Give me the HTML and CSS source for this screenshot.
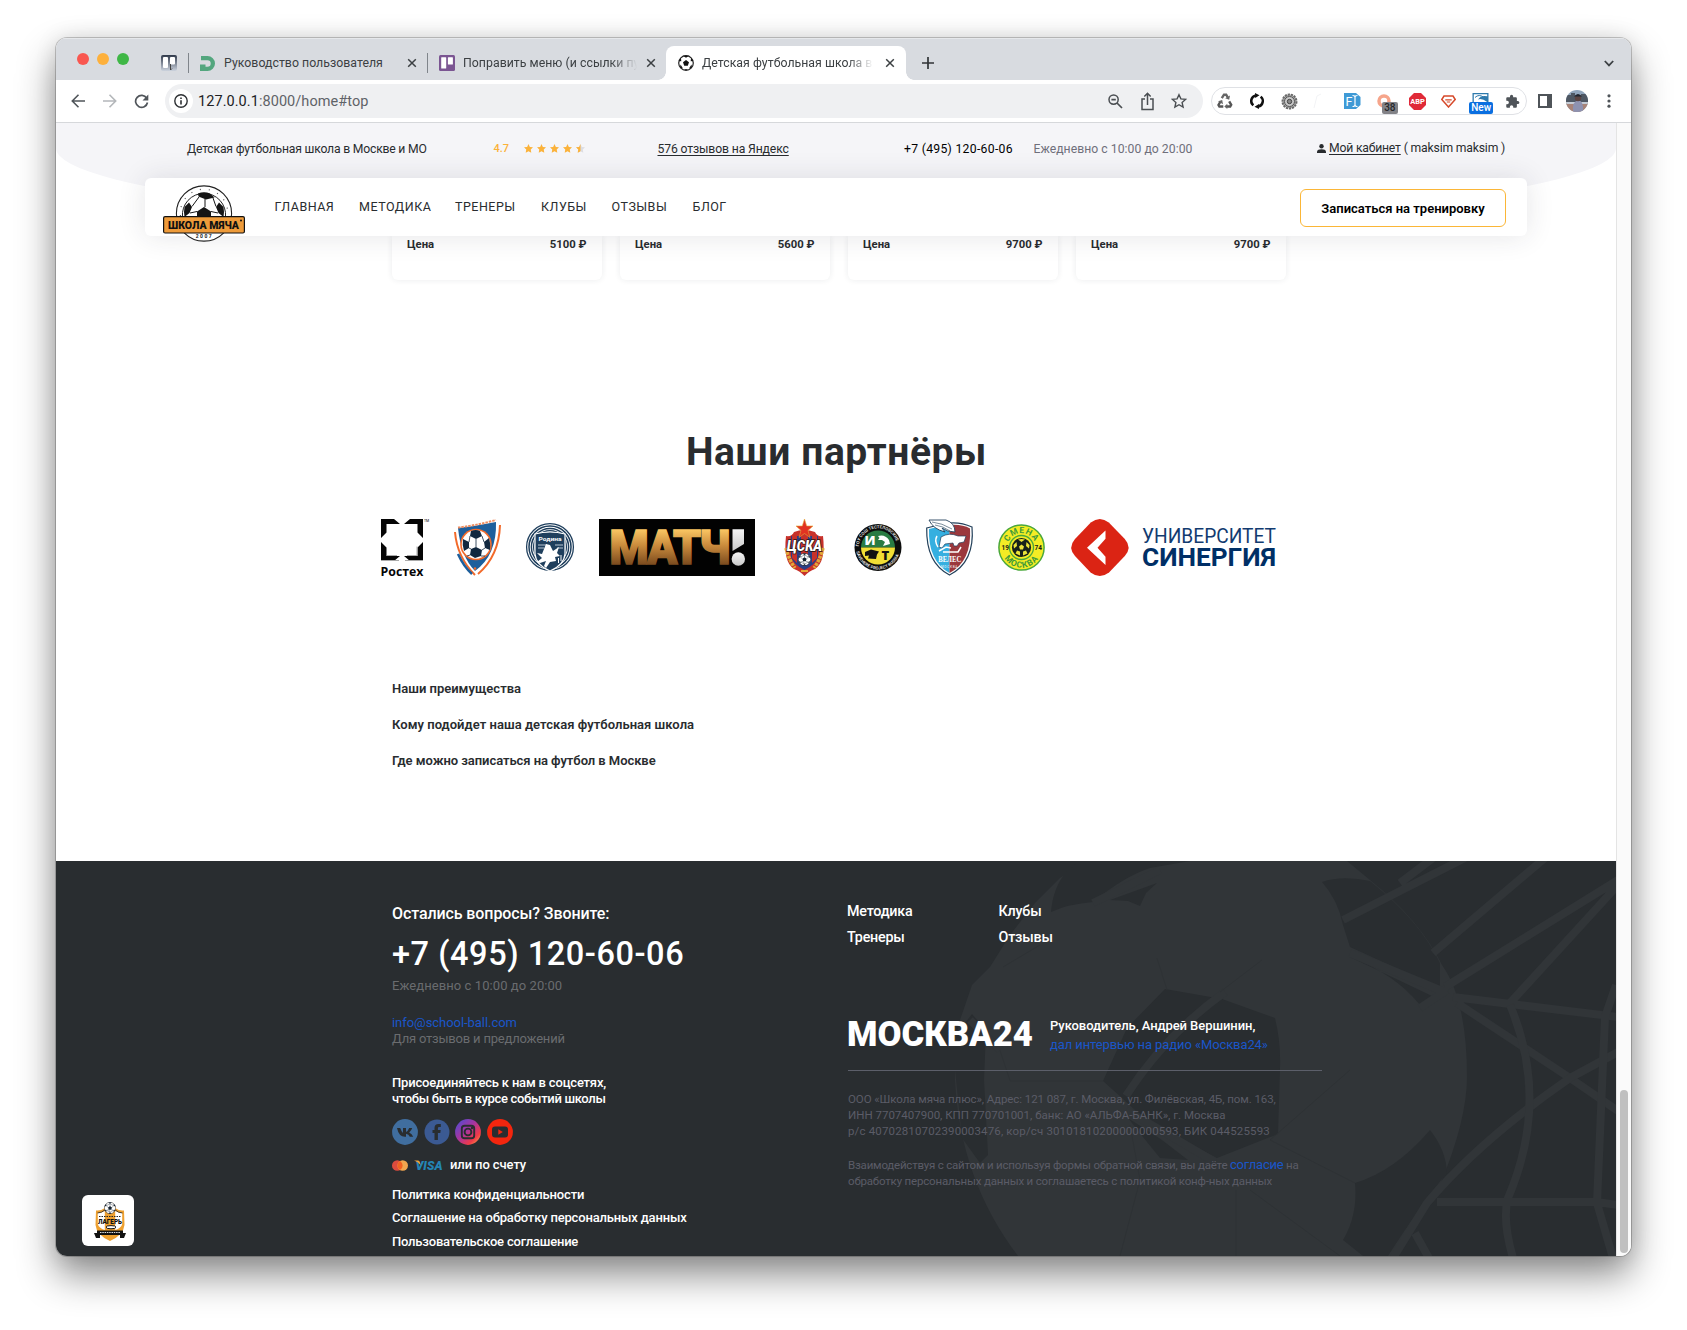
FILE: index.html
```html
<!DOCTYPE html>
<html lang="ru">
<head>
<meta charset="utf-8">
<title>Детская футбольная школа в Москве</title>
<link rel="stylesheet" href="styles.css">
</head>
<body>
<svg class="defs" width="0" height="0" aria-hidden="true">
  <symbol id="ball" viewBox="0 0 24 24">
    <circle cx="12" cy="12" r="11.4" fill="#fff" stroke="#1b1b1b" stroke-width=".9"/>
    <path fill="#12202f" d="M12 8l3.900 2.800-1.500 4.500H9.600l-1.500-4.500zM8.500 1.200Q12 0 15.500 1.200L12 3.600zM1 9.500Q2 6 4.500 3.600L4.600 7.500zM23 9.500Q22 6 19.500 3.600L19.400 7.500zM4.500 20Q2 17.800 1.300 14.900L5 16.600zM19.500 20Q22 17.800 22.700 14.900L19 16.600zM9 23l3-2.500 3 2.500q-3 .8-6 0z"/>
    <path fill="none" stroke="#12202f" stroke-width=".7" d="M12 3.500V8M4.600 7.500l3.500 3.300M19.400 7.500l-3.500 3.300M9.600 15.300L5 16.600M14.400 15.300l4.600 1.300M9.600 15.300l2.400 5.200M4.600 7.500L12 3.600l7.400 3.900M5 16.600l7 3.900 7-3.900"/>
  </symbol>
  <symbol id="close" viewBox="0 0 10 10"><path d="M1.200 1.200l7.600 7.600M8.800 1.200L1.200 8.800" stroke="#3c4043" stroke-width="1.500" fill="none"/></symbol>
  <symbol id="star" viewBox="0 0 10 10"><path d="M5 0l1.500 3.200 3.500.5-2.500 2.400.6 3.600L5 8 1.900 9.700l.6-3.600L0 3.700l3.500-.5z"/></symbol>
</svg>

<div class="window">
  <div class="tabstrip">
    <div class="lights"><i class="red"></i><i class="yellow"></i><i class="green"></i></div>
    <svg class="pinned" width="16" height="16" viewBox="0 0 16 16"><defs><linearGradient id="pg" x2="0" y2="1"><stop offset="0" stop-color="#30394a"/><stop offset="1" stop-color="#ccd3de"/></linearGradient></defs><rect width="16" height="16" rx="2" fill="url(#pg)"/><rect x="2" y="2" width="5" height="11" rx="1" fill="#fff"/><rect x="9" y="2" width="5" height="7.500" rx="1" fill="#fff"/><path d="M9.500 9v6l1.500-1.500" stroke="#444" fill="none"/></svg>
    <div class="tab tab-one">
      <svg width="15" height="15" viewBox="0 0 15 15"><path d="M1 0h6.500a7.500 7.500 0 0 1 0 15H4v-4.200h3.400a3.300 3.300 0 0 0 0-6.600H1z" fill="#53a67e"/><path d="M0 8.500h5.500V11H4v4H0z" fill="#53a67e"/></svg>
      <span class="tab-title t1">Руководство пользователя</span>
      <svg class="x" width="10" height="10"><use href="#close"/></svg>
    </div>
    <div class="tab tab-two">
      <svg width="16" height="16" viewBox="0 0 16 16"><rect width="16" height="16" rx="1.500" fill="#7b5592"/><rect x="2.200" y="2.200" width="5" height="11.200" rx=".5" fill="#fff"/><rect x="8.900" y="2.200" width="5" height="7.200" rx=".5" fill="#fff"/></svg>
      <span class="tab-title t2">Поправить меню (и ссылки пу</span>
      <svg class="x" width="10" height="10"><use href="#close"/></svg>
    </div>
    <div class="tab active">
      <svg width="16" height="16" viewBox="0 0 16 16"><circle cx="8" cy="8" r="7.300" fill="#fff" stroke="#222" stroke-width="1.200"/><path fill="#111" d="M8 5l3 2.200-1.200 3.500H6.200L5 7.200zM5 .8h6L8 2.800zM.6 6L3 3.200l.3 3zM15.400 6L13 3.200l-.3 3zM2 12.500l.5-3 2.500 4zM14 12.500l-.5-3-2.500 4zM6 15l2-1 2 1z"/></svg>
      <span class="tab-title t3">Детская футбольная школа в</span>
      <svg class="x" width="10" height="10"><use href="#close"/></svg>
    </div>
    <svg class="plus" width="12" height="12" viewBox="0 0 12 12"><path d="M6 0v12M0 6h12" stroke="#303336" stroke-width="1.700"/></svg>
    <svg class="chev" width="10" height="7" viewBox="0 0 10 7"><path d="M.8 1L5 5.400 9.200 1" fill="none" stroke="#3c4043" stroke-width="1.800"/></svg>
  </div>

  <div class="toolbar">
    <svg class="back" width="14" height="14" viewBox="0 0 14 14"><path d="M14 7H1.500M7.500 .8L1.300 7l6.200 6.200" fill="none" stroke="#50555a" stroke-width="1.600"/></svg>
    <svg class="fwd" width="14" height="14" viewBox="0 0 14 14"><path d="M0 7h12.500M6.500 .8L12.700 7l-6.200 6.200" fill="none" stroke="#b4b7ba" stroke-width="1.600"/></svg>
    <svg class="reload" width="15" height="15" viewBox="0 0 15 15"><path d="M12.700 4.200A6 6 0 1 0 13.500 8.500" fill="none" stroke="#50555a" stroke-width="1.700"/><path d="M14.300 .6v5.800H8.500z" fill="#50555a"/></svg>
    <div class="omnibox">
      <span class="info"><svg width="14" height="14" viewBox="0 0 14 14"><circle cx="7" cy="7" r="6.200" fill="none" stroke="#2d3033" stroke-width="1.400"/><path d="M7 6.200v4.200M7 3.500v1.600" stroke="#2d3033" stroke-width="1.600"/></svg></span>
      <span class="url"><b>127.0.0.1</b>:8000/home#top</span>
      <svg class="o1" width="15" height="15" viewBox="0 0 15 15"><circle cx="5.600" cy="5.600" r="4.600" fill="none" stroke="#4a4e52" stroke-width="1.500"/><path d="M9 9l5 5M3.400 5.600h4.400" stroke="#4a4e52" stroke-width="1.700"/></svg>
      <svg class="o2" width="13" height="19" viewBox="0 0 13 19"><path d="M4 7H1v10.500h11V7H9M6.500 13V1.500M3.300 4.500l3.200-3.200 3.200 3.200" fill="none" stroke="#4a4e52" stroke-width="1.500"/></svg>
      <svg class="o3" width="16" height="16" viewBox="0 0 16 16"><path d="M8 1.700l1.900 4.200 4.700.5-3.500 3.100 1 4.500L8 11.700 3.900 14l1-4.500L1.400 6.400l4.700-.5z" fill="none" stroke="#4a4e52" stroke-width="1.400"/></svg>
    </div>
    <div class="extensions">
      <svg width="16" height="16" viewBox="0 0 16 16"><path d="M4.800 5.200L7 1.700h2.200l1.600 2.800" fill="none" stroke="#666" stroke-width="2.400"/><path d="M12.200 8.300l2 3.500-1 1.700H9.800M6.300 13.500H2.400L1.500 12l2-3.500" fill="none" stroke="#555" stroke-width="2.400"/><path d="M13 2.500l-.8 4.200-4-1.500zM10.300 10.800V16l-3-2.500zM1 8.200l4.200-1.200.8 4.200z" fill="#666"/></svg>
      <svg width="16" height="16" viewBox="0 0 16 16"><path d="M6.800 2.400A5.700 5.700 0 0 0 4.300 12.400M9.200 13.600A5.700 5.700 0 0 0 11.700 3.600" fill="none" stroke="#111" stroke-width="2.500"/><path d="M6 0l4.500 2.300L6.200 5zM10 11v5l-4.500-2.300z" fill="#111"/></svg>
      <svg width="17" height="17" viewBox="0 0 17 17"><circle cx="8.500" cy="8.500" r="7" fill="#aaa" stroke="#6a6a6a" stroke-width="2" stroke-dasharray="2.200 .9"/><circle cx="8.500" cy="8.500" r="5" fill="#c9c9c9" stroke="#555"/><circle cx="8.500" cy="8.500" r="2.200" fill="#888" stroke="#444"/></svg>
      <svg class="faint" width="10" height="16" viewBox="0 0 10 16"><path d="M1 15L4 3l4-2" stroke="#f2f3f5" fill="none"/></svg>
      <svg width="17" height="16" viewBox="0 0 17 16"><path d="M0 0h12l4.500 4v8L12 16H0z" fill="#3f9ad6"/><text x="1.500" y="12.500" class="fi">F</text><path d="M8.500 2.500q2.500 0 2.500 1.500 0-1.500 2.500-1.500M8.500 13.500q2.500 0 2.500-1.500 0 1.500 2.500 1.500M11 4v8" stroke="#fff" stroke-width="1.200" fill="none"/></svg>
      <span class="ext-badge"><svg width="16" height="16" viewBox="0 0 16 16"><circle cx="7" cy="8" r="5" fill="none" stroke="#f6a58b" stroke-width="3.500"/></svg><em class="b38">38</em></span>
      <svg width="17" height="17" viewBox="0 0 17 17"><path d="M5 0h7l5 5v7l-5 5H5l-5-5V5z" fill="#e02a38"/><text x="8.500" y="11.400" text-anchor="middle" textLength="14.500" lengthAdjust="spacingAndGlyphs" class="abp">ABP</text></svg>
      <svg width="15" height="13" viewBox="0 0 15 13"><path d="M3 1h9l2.200 3.500L7.500 12 .8 4.500z" fill="none" stroke="#d64a2b" stroke-width="1.500"/><path d="M4.300 4.800h6.400M5.800 7h3.400" stroke="#d64a2b" stroke-width="1.200"/></svg>
      <span class="ext-badge"><svg width="17" height="17" viewBox="0 0 17 17"><rect x=".5" width="16" height="16" fill="#2e7aad"/><path d="M1.800 1.300h13.400v2Q9 2 6 6.500q4-1.500 9.200 2.500H1.800z" fill="#fff"/><path d="M3 4.500q4-4 9 0" stroke="#2e7aad" fill="none"/></svg><em class="bnew">New</em></span>
      <svg width="15" height="15" viewBox="0 0 24 24"><path fill="#4f5459" d="M20.500 11H19V7c0-1.100-.9-2-2-2h-4V3.500a2.500 2.500 0 0 0-5 0V5H4c-1.100 0-2 .9-2 2v3.800h1.500a2.700 2.700 0 0 1 0 5.400H2V20c0 1.100.9 2 2 2h3.800v-1.500a2.700 2.700 0 0 1 5.400 0V22H17c1.100 0 2-.9 2-2v-4h1.500a2.500 2.500 0 0 0 0-5z"/></svg>
    </div>
    <svg class="side" width="14" height="14" viewBox="0 0 14 14"><path d="M0 0h14v14H0zM2 2v10h7V2z" fill="#4f5459" fill-rule="evenodd"/></svg>
    <svg class="avatar" width="22" height="22" viewBox="0 0 22 22"><defs><clipPath id="av"><circle cx="11" cy="11" r="11"/></clipPath></defs><g clip-path="url(#av)"><rect width="22" height="22" fill="#8fa4bb"/><path d="M0 5h5V3h4v3h6V4h7v8H0z" fill="#4e5763"/><path d="M0 12h22v10H0z" fill="#a88478"/><path d="M0 12h22v2H0z" fill="#c4ccd6"/><path d="M7 22q-1-11 5-11.500T17 22z" fill="#8e92b0"/><circle cx="12" cy="8" r="3.200" fill="#5b4442"/><path d="M8 6.500q4-5 8 0z" fill="#1f242e"/></g></svg>
    <svg class="dots" width="4" height="14" viewBox="0 0 4 14"><g fill="#4f5459"><circle cx="2" cy="1.800" r="1.600"/><circle cx="2" cy="7" r="1.600"/><circle cx="2" cy="12.200" r="1.600"/></g></svg>
  </div>

  <div class="viewport">
    <div class="page">
      <header class="site-header">
        <svg class="arc" width="1560" height="110" viewBox="0 0 1560 110"><path d="M0 0H1560V25A780 82 0 0 1 0 25z" fill="#f5f5f8"/></svg>
        <div class="topbar">
          <span class="tb-title">Детская футбольная школа в Москве и МО</span>
          <span class="rating">4.7</span>
          <span class="stars">
            <svg width="9" height="9" viewBox="0 0 10 10"><use href="#star" width="10" height="10"/></svg><svg width="9" height="9" viewBox="0 0 10 10"><use href="#star" width="10" height="10"/></svg><svg width="9" height="9" viewBox="0 0 10 10"><use href="#star" width="10" height="10"/></svg><svg width="9" height="9" viewBox="0 0 10 10"><use href="#star" width="10" height="10"/></svg><svg width="9" height="9" viewBox="0 0 10 10"><use href="#star" width="10" height="10" fill="#dcdde3"/><path d="M5 0v8L1.900 9.700l.6-3.600L0 3.700l3.500-.5z"/></svg>
          </span>
          <a class="reviews">576 отзывов на Яндекс</a>
          <span class="tb-phone">+7 (495) 120-60-06</span>
          <span class="hours">Ежедневно с 10:00 до 20:00</span>
          <span class="account"><svg width="9" height="9" viewBox="0 0 9 9"><circle cx="4.500" cy="2.300" r="2.200"/><path d="M0 9V7.500Q.5 5.300 4.500 5.300T9 7.500V9z"/></svg><a>Мой кабинет</a> <span class="who">( maksim maksim )</span></span>
        </div>
        <nav class="navbar">
          <svg class="logo" width="82" height="58" viewBox="0 0 82 58">
            <circle cx="41" cy="28.500" r="27.600" fill="#fff" stroke="#222" stroke-width="1.100"/>
            <path d="M17.500 31a23.700 23.700 0 1 1 47 0" fill="none" stroke="#555" stroke-width="1.200" stroke-dasharray="1 8"/>
            <path d="M19.500 32a21.600 21.600 0 1 1 43 0" fill="#fff" stroke="#222"/>
            <path fill="#151515" d="M35 8.500q6-2.500 12 0l4.500 4L43 14.500l-7.500-3zM21.500 22L26 17.500l3 4.500-2.500 6-5 4q-1-5 0-10zM60.500 22L56 17.500 53 22l2.500 6 5 4q1-5 0-10zM34 26.500l7-4.500 7 4.500V32H34z"/>
            <path d="M42 14v8M29 21.500l7-9.500M53 21.500l-3-8.500M27 28l7-1.500M55 28l-7-1.500" stroke="#151515" stroke-width="1" fill="none"/>
            <rect x=".6" y="31.600" width="80.800" height="16.400" rx="1.500" fill="#ee9b3a" stroke="#111" stroke-width="1.200"/>
            <text x="5" y="43.800" textLength="71" lengthAdjust="spacingAndGlyphs" class="logo-name">ШКОЛА МЯЧА</text>
            <circle cx="78" cy="35.500" r="1" fill="#111"/>
            <text x="41.500" y="53.300" text-anchor="middle" class="logo-year">2007</text>
          </svg>
          <a>ГЛАВНАЯ</a><a>МЕТОДИКА</a><a>ТРЕНЕРЫ</a><a>КЛУБЫ</a><a>ОТЗЫВЫ</a><a>БЛОГ</a>
          <button class="cta">Записаться на тренировку</button>
        </nav>
      </header>

      <section class="prices">
        <div class="price"><span>Цена</span><span>5100 ₽</span></div>
        <div class="price"><span>Цена</span><span>5600 ₽</span></div>
        <div class="price"><span>Цена</span><span>9700 ₽</span></div>
        <div class="price"><span>Цена</span><span>9700 ₽</span></div>
      </section>

      <h2 class="heading">Наши партнёры</h2>

      <section class="partners">
        <svg width="48" height="58" viewBox="0 0 48 58">
          <g fill="#050505"><path d="M0 0h13l6 5H5.500v8.500L0 19zM42 0H29l-6 5h13.500v8.500L42 19zM0 42h13l6-5H5.500v-8.500L0 23zM42 42H29l-6-5h13.500v-8.500L42 23z"/></g>
          <path d="M6 36.500h10M26 36.500h10v-9M0 41.500h18M24 41.500h18" stroke="#aaa" fill="none"/>
          <text x="-.5" y="56.500" textLength="43" lengthAdjust="spacingAndGlyphs" class="rostec">Ростех</text>
          <text x="43" y="3" class="tm">TM</text>
        </svg>
        <svg width="48" height="57" viewBox="0 0 48 57">
          <path d="M4 9Q22 7 42 3Q43 36 21 52Q7 38 4 9z" fill="#1d5f9c"/>
          <path d="M1 13Q3 38 21 56M46 6Q45 37 24 55" fill="none" stroke="#f26a2a" stroke-width="2"/>
          <path d="M4 35Q10 48 18 55" fill="none" stroke="#1d5f9c" stroke-width="2.500"/>
          <path d="M4 8.500Q22 6.500 42 1" fill="none" stroke="#ee8d60" stroke-width="2" stroke-dasharray="2.500 1"/>
          <circle cx="22" cy="25.500" r="15.800" fill="#f26a2a"/><circle cx="22" cy="25.500" r="14.200" fill="#fff"/>
          <path d="M17 12q5-2 9 0l2 5-6 3-6-3zM9 20l6 3v6l-5 3q-2-6-1-12zM35 19l-5 4 1 6 5 2q1-6-1-12zM22 28l6 3-1 6-6 2-5-3 1-6z" fill="#11283f"/>
          <path d="M16 17l-1 6M28 17l2 6M15 29l2 1M31 29l-3 2M16 36l-3 1M27 37l4 0M22 20v8" stroke="#11283f" stroke-width=".8"/><circle cx="21" cy="49.500" r="1.300" fill="#f26a2a"/>
        </svg>
        <svg width="48" height="57" viewBox="0 0 48 57">
          <circle cx="24" cy="28" r="23.400" fill="#fff" stroke="#1f3f5d" stroke-width="1.300"/>
          <g fill="none" stroke="#1f3f5d" stroke-width="1.500"><circle cx="24" cy="28" r="21"/><circle cx="24" cy="28" r="18.600"/><circle cx="24" cy="28" r="16.300"/></g>
          <path d="M9 15Q24 11 39 15V35Q38 46 24 52Q10 46 9 35z" fill="#1f3f5d" stroke="#fff" stroke-width="1.200"/>
          <text x="24" y="21.500" text-anchor="middle" textLength="23" lengthAdjust="spacingAndGlyphs" class="rodina">Родина</text>
          <path d="M12 26h9M12 29h6M29 26h8M31 29h6" stroke="#b9c6d3"/>
          <path d="M20 25l4 1 3 6 6-4-2 6 3 3-5 1 1 4-6 1-4 6-2-2 2-5-6 2-3-1 5-4-5-5 5 1z" fill="#fff"/><path d="M35 36v6M32.500 39v5" stroke="#fff"/>
        </svg>
        <svg width="156" height="57" viewBox="0 0 156 57">
          <defs><linearGradient id="gold" gradientUnits="userSpaceOnUse" x1="0" y1="10" x2="0" y2="47"><stop offset="0" stop-color="#fcc864"/><stop offset=".45" stop-color="#c98a3c"/><stop offset="1" stop-color="#75461c"/></linearGradient><linearGradient id="silver" x2="0" y2="1"><stop offset="0" stop-color="#f5f5f5"/><stop offset="1" stop-color="#c9c9c9"/></linearGradient></defs>
          <rect width="156" height="57" fill="#020202"/>
          <text x="10.500" y="45.300" textLength="119" lengthAdjust="spacingAndGlyphs" class="match">МАТЧ</text>
          <path fill="url(#silver)" d="M133.500 10.300h11.500V25l-11.500 7z"/><circle cx="139.300" cy="40" r="6.700" fill="url(#silver)"/>
        </svg>
        <svg width="41" height="57" viewBox="0 0 41 57">
          <path d="M2 17q6 1 8-4 10-4 21 0 2 5 8 4 3 26-8 33-6 2-10.500 7-4.500-5-10.500-7Q-1 43 2 17z" fill="#c7312b"/>
          <path d="M2 29q3 12 9 20M39 29q-3 12-9 20" fill="none" stroke="#e0a838" stroke-width="3.500" stroke-dasharray="3 1"/>
          <path d="M7 17h27v21q-3 8-13.500 13Q10 46 7 38z" fill="#293d85"/><path d="M8 17h5v27l-5-5zM17 17h7v18h-7zM28 17h5v22l-5 5z" fill="#c7312b"/>
          <path d="M20.500 0l2.200 7H29l-5 4.500 2 7-5.500-4-5.500 4 2-7L12 7h6.300z" fill="#e23222" stroke="#e4a738" stroke-width=".6"/>
          <text x="3" y="32" textLength="35" lengthAdjust="spacingAndGlyphs" class="cska">ЦСКА</text>
          <use href="#ball" x="14" y="34" width="13" height="13"/><path d="M17 52h7" stroke="#e9aa32" stroke-width="2"/>
        </svg>
        <svg width="48" height="57" viewBox="0 0 48 57">
          <circle cx="24" cy="28.500" r="23.500" fill="#0c0d0c"/><path d="M7 28.500a17 17 0 0 1 34 0z" fill="#297b43"/><path d="M7 28.500a17 17 0 0 0 34 0z" fill="#f1de35"/>
          <text x="10.500" y="26" class="it-a">И</text><text x="27.500" y="40.500" class="it-b">Т</text>
          <path d="M24 17q7-2 11 4l1 4-7 2 2-4-3-2-4 0 1.500-2z" fill="#fff"/><path d="M11 33l6-2.500 8 2-2 3-1 4.500-8-.5 1-3-4 .5z" fill="#111"/>
          <defs><path id="it-top" d="M4.800 28.500a19.200 19.200 0 0 1 38.400 0"/><path id="it-bot" d="M2 28.500a22 22 0 0 0 44 0"/></defs>
          <text class="it-ring"><textPath href="#it-top" startOffset="1">ГОУ СОШ ТЕСТЕЛОВСКИЕ</textPath></text><text class="it-ring"><textPath href="#it-bot" startOffset="4">SAVEHERE PROJECT RUSSIA</textPath></text>
        </svg>
        <svg width="47" height="57" viewBox="0 0 47 57">
          <path d="M.7 9Q12 6 23.500 4Q35 3 46 8Q49 43 23.500 56Q0 44 .7 9z" fill="#fff" stroke="#24415b" stroke-width="1.200"/>
          <path d="M3 10Q14 7 23.500 6v48Q2 42 3 10z" fill="#35afe0"/><path d="M23.500 6Q36 5 44 9.500Q46 42 23.500 54z" fill="#9b383d"/>
          <path d="M3 1h17q9 3 9 12-8 0-13-4l3 4Q7 10 3 1z" fill="#fff" stroke="#24415b" stroke-width=".9"/><path d="M6 3q10 1 20 7M9 6q8 1 15 6" stroke="#24415b" stroke-width=".6" fill="none"/>
          <path d="M15 18q8-5 17-1l8 0-2 6-5 1-2 3h-3l-1-3-8 1-3 4-3-1 1-5z" fill="#fff" stroke="#24415b" stroke-width=".7"/>
          <path d="M12 28q-4-6-1-11M13 32l7-4 5 1M17 33h15l3-5" fill="none" stroke="#fff" stroke-width="1.500"/>
          <text x="23.700" y="43" text-anchor="middle" textLength="23" lengthAdjust="spacingAndGlyphs" class="veles">ВЕЛЕС</text>
          <text x="23.500" y="48.500" text-anchor="middle" class="veles-sm">МОСКВА</text>
        </svg>
        <svg width="47" height="57" viewBox="0 0 47 57">
          <circle cx="23.500" cy="28.500" r="22.600" fill="#f4ec25" stroke="#4aa83c" stroke-width="1.500"/><circle cx="23.500" cy="28.500" r="12" fill="#f4ec25" stroke="#4aa83c" stroke-width="1.300"/>
          <circle cx="23.500" cy="28.500" r="9.600" fill="#17211a"/><path d="M20 20.500q3.500-1 7 0l-3.500 2.500zM15.500 26l3-3 .5 4-3 2.500zM31.500 26l-3-3-.5 4 3 2.500zM17.500 34.500l1.500-3 3 1v4zM29.500 34.500l-1.500-3-3 1v4zM23.500 25.500l2.500 2-1 3h-3l-1-3z" fill="#e9e23a"/>
          <defs><path id="sm-top" d="M9.200 28.500a14.300 14.300 0 0 1 28.600 0"/><path id="sm-bot" d="M3.300 28.500a20.200 20.200 0 0 0 40.400 0"/></defs>
          <text class="smena"><textPath href="#sm-top" startOffset="50%" text-anchor="middle">СМЕНА</textPath></text><text class="smena"><textPath href="#sm-bot" startOffset="50%" text-anchor="middle">МОСКВА</textPath></text>
          <text x="3.500" y="31" class="sm-num">19</text><text x="36.500" y="31" class="sm-num">74</text>
        </svg>
        <svg width="205" height="57" viewBox="0 0 205 57">
          <path d="M28.800 0q4.500 0 9 3.500l16 16.500q7.500 8.500 0 17L38 53.500q-4.500 3.500-9.200 3.500-4.700 0-9.200-3.500L4 37q-7.500-8.500 0-17L19.800 3.500Q24.300 0 28.800 0z" fill="#db2414"/>
          <path d="M34.500 11.500v8.200l-8 9 8 9v8.200L16 28.700z" fill="#fff"/>
          <text x="71" y="24" textLength="134" lengthAdjust="spacingAndGlyphs" class="syn-a">УНИВЕРСИТЕТ</text>
          <text x="71" y="47" textLength="134" lengthAdjust="spacingAndGlyphs" class="syn-b">СИНЕРГИЯ</text>
        </svg>
      </section>

      <section class="faq">
        <a class="q1">Наши преимущества</a>
        <a class="q2">Кому подойдет наша детская футбольная школа</a>
        <a class="q3">Где можно записаться на футбол в Москве</a>
      </section>

      <footer class="footer">
        <svg class="footer-art" width="661" height="395" viewBox="955 861 661 395">
          <path fill="#313538" d="M1085 861L1060 878 1035 903 1010 935 990 967 972 985 960 1020Q952 1050 955 1080 960 1180 1018 1256H1393L1440 1185Q1467 1120 1467 1077 1467 1000 1442 965 1420 920 1370 880L1347 861z"/>
          <g fill="#292d30"><path d="M1067 871l13-10h110l-40 7q-25 8-57 34-25 2-42 10 2-25 16-41z"/><path d="M1110 900l47-17-11 10-6 13-12-5z"/><path d="M1322 882q20-7 48-1 50 40 70 82v25L1350 947l-7-22q-5-25-21-43z"/><path d="M1350 957q45 17 70 48l12-9z"/><path d="M1165 989l57 10 53 19q6 25 5 50l-2 66-61 24-67-34-28-26-19-17 24-53z"/><path d="M1128 1118l34 22 26 20-28-2q-18-22-32-40z"/><path d="M952 1040l20-26 14 16-2 50 4 75-8 8-18-25z"/><path d="M1430 1130q16 20 17 43-25 30-59 83h-25l-20-16q15-25 12-57 40-12 75-53z"/></g>
          <g fill="none" stroke="#313538" stroke-width="8"><path d="M1343 920L1465 858M1400 883L1433 858M1433 953L1545 858"/><path d="M1445 987L1618 880M1510 1003L1618 885M1350 953L1447 993M1420 1008L1447 990M1453 997L1618 1017M1457 1003L1570 1078 1618 1111"/><path d="M1618 1052L1570 1078Q1480 1140 1427 1203L1393 1258"/><path d="M1510 1005Q1550 1100 1508 1198 1502 1220 1513 1258M1616 985L1605 1017 1597 1203 1613 1258M1437 1202H1597L1618 1205M1415 1233L1430 1260"/><path d="M1225 992Q1165 1035 1126 1096M1126 1110L1215 1162M1093 903L1160 870M970 1020L1000 1050"/></g>
          <g fill="none" stroke="#2e3235" stroke-width="1"><path d="M1350 1070L1270 1140 1355 1183M1003 967L1040 945M1157 958L1167 990M1262 960L1220 992M1236 1190V1256M1250 1190L1340 1256M1130 1125L1140 1180 1120 1256M1103 1081H1010L1000 1050"/></g>
        </svg>
        <div class="foot-left">
          <p class="ask">Остались вопросы? Звоните:</p>
          <p class="phone">+7 (495) 120-60-06</p>
          <p class="muted daily">Ежедневно с 10:00 до 20:00</p>
          <a class="mail">info@school-ball.com</a>
          <p class="muted feedback">Для отзывов и предложений</p>
          <p class="join">Присоединяйтесь к нам в соцсетях,<br><span class="join-two">чтобы быть в курсе событий школы</span></p>
          <div class="social">
            <svg width="26" height="26" viewBox="0 0 26 26"><circle cx="13" cy="13" r="12.900" fill="#406e9f"/><path d="M5 9h3.200q1 3 2.800 5V9h3v4q2-1 3.200-4h3q-.8 2.600-3 4.500 2.800 1.500 4 4.300h-3.400q-1-2.400-3.800-3v3q-7 .8-9-8.800z" fill="#292d30"/></svg>
            <svg width="26" height="26" viewBox="0 0 26 26"><circle cx="13" cy="13" r="12.500" fill="#3b5a93"/><path d="M10.500 21v-7H8.500v-3h2V9q0-4 4-4h2.300v3h-1.600q-1.300 0-1.300 1.300V11h2.800l-.4 3h-2.400v7z" fill="#292d30"/></svg>
            <svg width="26" height="26" viewBox="0 0 26 26"><defs><linearGradient id="ig" x2="1" y2="1"><stop offset=".1" stop-color="#5a49cc"/><stop offset=".45" stop-color="#a9349e"/><stop offset=".75" stop-color="#f03a47"/><stop offset="1" stop-color="#fdb54d"/></linearGradient></defs><circle cx="13" cy="13" r="12.900" fill="url(#ig)"/><g fill="none" stroke="#292d30" stroke-width="1.900"><rect x="6.800" y="6.800" width="12.400" height="12.400" rx="2.800"/><circle cx="13" cy="13" r="3.400"/></g><circle cx="17" cy="9" r="1.200" fill="#292d30"/></svg>
            <svg width="26" height="26" viewBox="0 0 26 26"><circle cx="13" cy="13" r="12.900" fill="#f3260e"/><rect x="5" y="7.500" width="16" height="11" rx="3" fill="#292d30"/><path d="M11.300 10.300l4.500 2.700-4.500 2.700z" fill="#f3260e"/></svg>
          </div>
          <div class="pay">
            <svg width="16" height="11" viewBox="0 0 16 11"><circle cx="5.300" cy="5.500" r="5.300" fill="#dc4b3e"/><circle cx="10.700" cy="5.500" r="5.300" fill="#f2a64f"/><path d="M8 .9a5.300 5.300 0 0 1 0 9.200 5.300 5.300 0 0 1 0-9.200z" fill="#f26122"/></svg>
            <svg width="30" height="11" viewBox="0 0 30 11"><text x="1.500" y="10.200" textLength="27" lengthAdjust="spacingAndGlyphs" class="visa">VISA</text><path d="M0 .6h4q1.500 0 2 2L6.500 5Q4 2 0 .6z" fill="#eba23b"/></svg>
            <span class="invoice">или по счету</span>
          </div>
          <div class="legal"><a class="l1">Политика конфиденциальности</a><a class="l2">Соглашение на обработку персональных данных</a><a class="l3">Пользовательское соглашение</a></div>
        </div>
        <div class="foot-right">
          <div class="foot-nav"><a>Методика</a><a>Клубы</a><a>Тренеры</a><a>Отзывы</a></div>
          <div class="radio">
            <svg width="186" height="28" viewBox="0 0 186 28"><text x="-1" y="26.800" textLength="186" lengthAdjust="spacingAndGlyphs" class="m24">МОСКВА24</text></svg>
            <div><p class="r1">Руководитель, Андрей Вершинин,</p><a class="r2">дал интервью на радио «Москва24»</a></div>
          </div>
          <div class="requisites">
            <p class="d1">ООО «Школа мяча плюс», Адрес: 121 087, г. Москва, ул. Филёвская, 4Б, пом. 163,</p>
            <p class="d2">ИНН 7707407900, КПП 770701001, банк: АО «АЛЬФА-БАНК», г. Москва</p>
            <p class="d3">р/с 40702810702390003476, кор/сч 30101810200000000593, БИК 044525593</p>
          </div>
          <div class="consent">
            <p class="c1">Взаимодействуя с сайтом и используя формы обратной связи, вы даёте <a>согласие</a> на</p>
            <p class="c2">обработку персональных данных и соглашаетесь с политикой конф-ных данных</p>
          </div>
        </div>
      </footer>

      <div class="camp">
        <svg width="32" height="41" viewBox="0 0 32 41">
          <path d="M10 7.500a6.200 6.200 0 0 1 12 0Q25 10 30 9.500L30.500 24q-1 10-14.500 16Q2.500 34 1.500 24L2 9.500Q7 10 10 7.500z" fill="#eea02f"/>
          <path d="M3.800 12q4 0 7-2v19q-6-2-7-6zM28.200 12q-4 0-7-2v19q6-2 7-6z" fill="#fff"/><path d="M3.500 12q4 0 8-3.500M28.500 12q-4 0-8-3.500" fill="none" stroke="#222" stroke-width=".8"/>
          <use href="#ball" x="10" y="1" width="12" height="12"/>
          <path d="M5 15.500h22" stroke="#222" stroke-width="1.200" stroke-dasharray="1.500 1"/>
          <text x="16" y="23" text-anchor="middle" textLength="24" lengthAdjust="spacingAndGlyphs" class="camp-name">ЛАГЕРЬ</text>
          <ellipse cx="17" cy="26.200" rx="5" ry="1.600" fill="#fff" stroke="#111"/><path d="M0 32h32l-2 5h-4v-3H6v3H2z" fill="#111"/><path d="M3 29.500h26v4H3z" fill="#111"/><path d="M6 31.500h20" stroke="#ddd" stroke-dasharray="1.500 .8"/><path d="M9 35h14l-7 4z" fill="#eea02f"/>
        </svg>
      </div>
    </div>
    <div class="scrollbar"><i></i></div>
  </div>
</div>
</body>
</html>
```
FILE: styles.css
```css
* { box-sizing: border-box; }
body { margin: 0; height: 1330px; padding: 38px 0 0 56px; background: #fff; overflow: hidden; font-family: Roboto, "Noto Sans", sans-serif; color: #292c2f; }
p, h2 { margin: 0; }
svg { display: block; flex: none; }
.defs { position: absolute; }

.window { width: 1575px; height: 1218px; border-radius: 11px; overflow: hidden; background: #fff; box-shadow: 0 0 0 1px rgba(0,0,0,.2), 0 19px 38px rgba(0,0,0,.46), 0 0 22px rgba(0,0,0,.1); }

/* browser tabs */
.tabstrip { height: 42px; background: #d8dbe0; display: flex; align-items: flex-start; border-top: 1px solid #e6e8eb; font-size: 12.3px; color: #3c4043; }
.lights { display: flex; gap: 8px; margin: 14px 32px 0 21px; }
.lights i { width: 12px; height: 12px; border-radius: 50%; }
.red { background: #f95750; } .yellow { background: #fdb03c; } .green { background: #3fb746; }
.pinned { margin: 16px 11px 0 0; }
.tab { height: 34px; margin-top: 7px; display: flex; align-items: center; position: relative; }
.tab-one, .tab-two { width: 239px; padding-left: 12px; }
.tab-one::before, .tab-two::before { content: ""; position: absolute; left: 0; top: 7px; width: 1px; height: 20px; background: #80858b; }
.tab-title { margin-left: 8px; overflow: hidden; white-space: nowrap; line-height: 20px; letter-spacing: .03px; }
.t1 { width: 176px; margin-left: 9px; }
.t2, .t3 { -webkit-mask: linear-gradient(90deg, #000 84%, transparent 99%); }
.t2 { width: 176px; }
.t3 { width: 173px; }
.tab .x { margin-left: 7px; }
.active { width: 240px; background: #fff; border-radius: 8px 8px 0 0; padding-left: 12px; }
.active .x { margin-left: 10px; }
.active::before, .active::after { content: ""; position: absolute; bottom: 0; width: 8px; height: 8px; }
.active::before { left: -8px; background: radial-gradient(circle at 0 0, transparent 7.500px, #fff 8px); }
.active::after { right: -8px; background: radial-gradient(circle at 100% 0, transparent 7.500px, #fff 8px); }
.plus { margin: 18px 0 0 16px; }
.chev { margin: 21px 17px 0 auto; }

.toolbar { height: 43px; border-bottom: 1px solid #d6d8db; display: flex; align-items: center; }
.back { margin-left: 15px; } .fwd { margin-left: 18px; } .reload { margin-left: 17px; }
.omnibox { margin-left: 15.500px; width: 1038.500px; height: 34px; border-radius: 17px; background: #eff0f2; display: flex; align-items: center; padding-left: 4px; }
.info { width: 24px; height: 24px; border-radius: 50%; background: #fff; display: flex; align-items: center; justify-content: center; }
.url { margin-left: 5.500px; font-size: 14.5px; letter-spacing: .06px; color: #5f6368; flex: 1; }
.url b { font-weight: 400; color: #202124; }
.o2 { margin-left: 18px; } .o3 { margin: 0 16px 0 17px; }
.extensions { margin-left: 8px; width: 316px; height: 28px; border: 1px solid #dfe1e5; border-radius: 14px; display: flex; align-items: center; justify-content: space-between; padding: 0 6px 0 5px; }
.faint { margin-right: 5px; }
.ext-badge { position: relative; }
.ext-badge em { position: absolute; top: 9px; font: 500 10px/12px Roboto, sans-serif; border-radius: 2px; text-align: center; height: 12px; }
.b38 { left: 5px; width: 16px; background: #828287; color: #26272a; }
.bnew { left: -3px; width: 24px; background: #0a6fe0; color: #fff; }
.abp { font: 700 7.500px Roboto, sans-serif; fill: #fff; }
.fi { font: 400 12.500px Roboto, sans-serif; fill: #fff; }
.side { margin-left: 11px; } .avatar { margin-left: 14px; } .dots { margin-left: 19px; }

/* page */
.viewport { display: flex; height: 1133px; }
.page { width: 1560px; position: relative; overflow: hidden; }
.scrollbar { width: 15px; background: #fafafa; border-left: 1px solid #e4e4e4; padding: 967px 0 0 3px; }
.scrollbar i { display: block; width: 8px; height: 163px; border-radius: 4px; background: #c0c0c0; }

.site-header { height: 113px; position: relative; z-index: 2; }
.arc { position: absolute; left: 0; top: 0; z-index: -1; }
.topbar { height: 55px; padding: 17px 0 0 131px; display: grid; grid-template-columns: 306.500px 30px 134px 246.500px 129.500px 283.500px 200px; font-size: 12.200px; line-height: 18px; white-space: nowrap; }
.tb-title { letter-spacing: -.2px; }
.rating { color: #fbb23a; font-size: 11px; font-weight: 500; }
.stars { display: flex; gap: 4px; padding-top: 4px; fill: #fbb23a; }
.reviews, .account a { text-decoration: underline; text-underline-offset: 2px; letter-spacing: -.13px; }
.tb-phone { color: #000; letter-spacing: .3px; }
.hours { color: #6f6f7b; letter-spacing: .04px; }
.account { margin-top: -1px; display: flex; }
.account svg { margin: 5px 3px 0 0; fill: #292c2f; }
.account a { letter-spacing: -.19px; }
.who { margin-left: 3px; letter-spacing: -.18px; }
.navbar { position: relative; margin: 0 0 0 89px; width: 1382px; height: 58px; background: #fff; border-radius: 6px; box-shadow: 0 0 28px rgba(40,45,60,.12); display: grid; grid-template-rows: 57px; grid-template-columns: 111.500px 84.500px 96px 86px 70.500px 81px 607.500px 206px; align-items: center; padding-left: 18px; font-size: 12.500px; letter-spacing: .5px; }
.navbar a { margin-top: -1px; }
.logo { align-self: start; margin-top: 7px; }
.logo-name { font: 900 11px Roboto, sans-serif; letter-spacing: 0; fill: #111; }
.logo-year { font: 700 5px Roboto, sans-serif; letter-spacing: 1.500px; fill: #222; }
.cta { height: 38px; margin-top: 3px; border: 1.500px solid #fbb637; border-radius: 6px; background: #fff; font: 600 13px Roboto, sans-serif; color: #000; padding: 0; }

.prices { display: grid; grid-template-columns: repeat(4, 210px); gap: 18px; padding-left: 336px; }
.price { height: 44px; border-radius: 0 0 6px 6px; box-shadow: 0 0 6px rgba(30,40,50,.09); padding: 0 15.500px 0 15px; display: flex; justify-content: space-between; font: 700 11.300px/17px Roboto, "Noto Sans", sans-serif; }

.heading { margin-top: 147px; height: 50px; font-size: 39px; line-height: 50px; font-weight: 700; padding-left: 630px; letter-spacing: .56px; white-space: nowrap; }

.partners { margin: 42px 0 0 325px; height: 57px; display: grid; grid-template-columns: 73px 72px 73px 185px 69.500px 72.500px 72px 73px 205px; }
.partners svg { overflow: visible; }
.rostec { font: 700 11.500px "Open Sans", sans-serif; fill: #050505; }
.tm { font: 3.500px Roboto, sans-serif; }
.rodina { font: 700 6px Roboto, sans-serif; fill: #fff; }
.match { font: 900 47.500px Roboto, sans-serif; letter-spacing: -2px; fill: url(#gold); stroke: url(#gold); stroke-width: 1.600px; }
.cska { font: italic 900 14px Roboto, sans-serif; fill: #fff; stroke: #2a1712; stroke-width: 1.500px; paint-order: stroke; }
.it-a { font: 800 13px "Open Sans", sans-serif; fill: #fff; }
.it-b { font: 800 13px "Open Sans", sans-serif; fill: #111; }
.it-ring { font: 700 4.300px Roboto, sans-serif; fill: #ddd; }
.veles { font: 700 9px "Liberation Serif", serif; fill: #fff; }
.veles-sm { font: 3px Roboto, sans-serif; fill: #fff; letter-spacing: .8px; }
.smena { font: 700 8.500px Roboto, sans-serif; letter-spacing: .8px; fill: #3e9a3a; }
.sm-num { font: 700 6.500px Roboto, sans-serif; fill: #17211a; }
.syn-a { font: 400 20.500px Roboto, sans-serif; fill: #123b70; }
.syn-b { font: 700 26.300px Roboto, sans-serif; fill: #002f66; }

.faq { margin: 95px 0 0 336px; display: flex; flex-direction: column; font-size: 13px; font-weight: 600; line-height: 36px; height: 190px; }
.q2 { letter-spacing: .03px; }
.q3 { letter-spacing: -.06px; }

/* footer */
.footer { position: relative; height: 395px; background: #292d30; color: #fff; display: grid; grid-template-columns: 455px 480px; padding-left: 336px; font-size: 13px; white-space: nowrap; font-weight: 500; }
.footer-art { position: absolute; right: 0; top: 0; }
.foot-left { padding-top: 40.500px; line-height: 16px; }
.foot-left a { display: block; }
.ask { font-size: 16px; line-height: 24px; letter-spacing: -.1px; }
.phone { font-size: 32.500px; line-height: 40px; margin-top: 8px; letter-spacing: .56px; }
.muted { color: #6a6c6f; font-weight: 400; }
.daily { margin-top: 4px; letter-spacing: .07px; }
.mail { margin-top: 21px; color: #1a56c9; font-weight: 400; letter-spacing: -.05px; }
.feedback { letter-spacing: -.2px; }
.join { margin-top: 28px; letter-spacing: -.18px; }
.join-two { letter-spacing: -.33px; }
.social { display: flex; gap: 5.500px; margin-top: 12.500px; }
.pay { display: flex; align-items: center; margin-top: 11.500px; }
.pay svg { margin: 1px 6px 0 0; }
.invoice { letter-spacing: -.1px; }
.visa { font: italic 900 13px Roboto, sans-serif; fill: #2485b5; }
.legal { margin-top: 10px; line-height: 23.700px; }
.l1 { letter-spacing: -.14px; } .l2 { letter-spacing: -.17px; } .l3 { letter-spacing: -.2px; }
.foot-right { position: relative; padding-top: 36.500px; font-size: 11.500px; line-height: 16px; }
.foot-nav { display: grid; grid-template-columns: 151.500px 152px; font-size: 14.300px; line-height: 26px; letter-spacing: -.2px; }
.radio { margin: 66px 0 0 1px; width: 474px; height: 55px; border-bottom: 1px solid #5c5f6a; display: flex; gap: 16px; font-size: 13px; line-height: 19px; }
.radio svg { margin-top: 3px; }
.radio a { color: #1a56c9; font-weight: 400; }
.r1 { letter-spacing: -.06px; } .r2 { letter-spacing: -.1px; }
.m24 { font: 900 35.500px Roboto, sans-serif; fill: #fff; }
.requisites, .consent { color: #5b5c67; margin: 20px 0 0 1px; font-weight: 400; }
.d1 { letter-spacing: -.08px; } .d3 { letter-spacing: .15px; }
.consent { margin-top: 18px; }
.c1 { letter-spacing: -.21px; } .c2 { letter-spacing: -.18px; }
.consent a { color: #1a56c9; font-size: 13px; line-height: 14px; }
.camp { position: absolute; left: 26px; bottom: 10px; width: 52px; height: 51px; border-radius: 6px; background: #fff; padding: 6px 0 0 12px; }
.camp-name { font: 900 8px Roboto, sans-serif; fill: #111; }
```
